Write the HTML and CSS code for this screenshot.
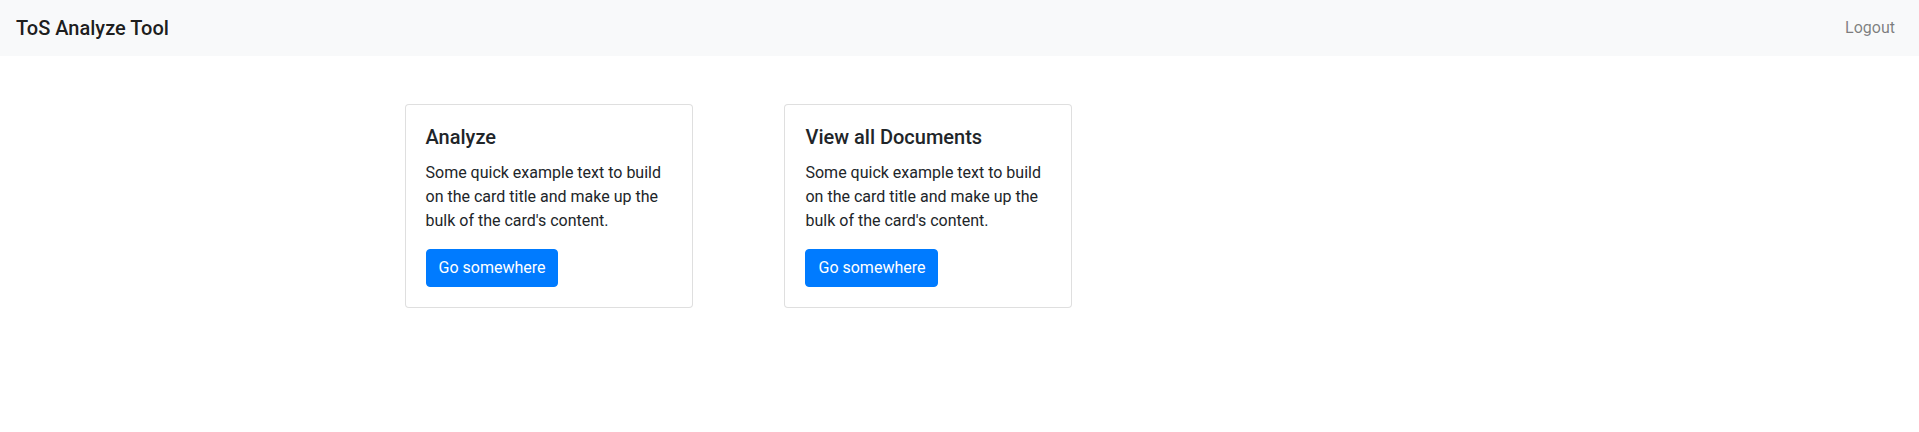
FILE: index.html
```html
<!DOCTYPE html>
<html lang="en">
<head>
<meta charset="utf-8">
<title>ToS Analyze Tool</title>
<link rel="stylesheet" href="styles.css">
</head>
<body>
<nav class="navbar">
  <a class="navbar-brand" href="#">ToS Analyze Tool</a>
  <a class="nav-link" href="#">Logout</a>
</nav>
<main class="container">
  <div class="row">
    <div class="col">
      <div class="card">
        <div class="card-body">
          <h5 class="card-title">Analyze</h5>
          <p class="card-text">Some quick example text to build on the card title and make up the bulk of the card's content.</p>
          <a href="#" class="btn">Go somewhere</a>
        </div>
      </div>
    </div>
    <div class="col">
      <div class="card">
        <div class="card-body">
          <h5 class="card-title">View all Documents</h5>
          <p class="card-text">Some quick example text to build on the card title and make up the bulk of the card's content.</p>
          <a href="#" class="btn">Go somewhere</a>
        </div>
      </div>
    </div>
    <div class="col"></div>
  </div>
</main>
</body>
</html>
```
FILE: styles.css
```css
* { box-sizing: border-box; }
body {
  margin: 0;
  font-family: Roboto, "Liberation Sans", sans-serif;
  font-size: 16px;
  line-height: 1.5;
  color: #212529;
  background: #fff;
}
a { text-decoration: none; }
.navbar {
  display: flex;
  align-items: center;
  justify-content: space-between;
  padding: 8px 16px;
  background: #f8f9fa;
}
.navbar-brand {
  font-size: 20px;
  line-height: 30px;
  padding: 5px 0;
  color: rgba(0,0,0,.9);
  font-weight: 500;
}
.nav-link {
  padding: 8px;
  color: rgba(0,0,0,.5);
}
.container {
  max-width: 1140px;
  margin: 48px auto 0;
  padding: 0 15px;
}
.row {
  display: flex;
  margin: 0 -15px;
}
.col {
  flex: 0 0 33.3333%;
  padding: 0 15px;
}
.card {
  width: 288px;
  border: 1px solid rgba(0,0,0,.125);
  border-radius: 4px;
  background: #fff;
}
.card-body { padding: 20px; }
.card-title {
  margin: 0 0 12px;
  font-size: 20px;
  line-height: 1.2;
  font-weight: 500;
}
.card-text { margin: 0 0 16px; }
.btn {
  display: inline-block;
  padding: 6px 12px;
  font-size: 16px;
  line-height: 1.5;
  color: #fff;
  background: #007bff;
  border: 1px solid #007bff;
  border-radius: 4px;
}
```
